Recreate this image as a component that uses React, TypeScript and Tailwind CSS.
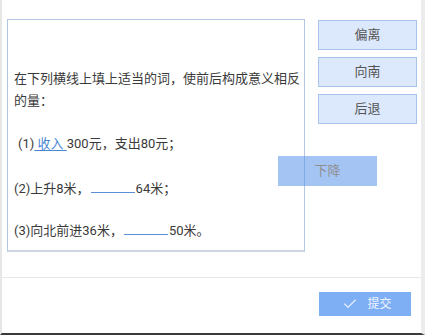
import { Check } from "lucide-react";

const font = { fontFamily: '"Roboto", "Noto Sans CJK SC", sans-serif' };

const options = ["偏离", "向南", "后退"];

function Blank() {
  return <span className="mx-[1px] inline-block w-[44px] border-b border-[#5b8fd8] align-baseline" />;
}

export default function App() {
  return (
    <div
      className="relative flex h-[335px] w-[425px] flex-col overflow-hidden border-b-2 border-l-2 border-r-4 border-b-[#3a3a3a] border-l-[#e6e6e6] border-r-[#ececec] bg-white text-[13px] text-[#3a3a3a]"
      style={font}
    >
      {/* ── Question + options ── */}
      <div className="flex h-[277px] pl-[5px] pt-[19px]">
        <div className="h-[233px] w-[298px] border border-[#b3c6e4] border-b-2 border-b-[#cdd5df] pl-[6px] pt-[48px] leading-[22px]">
          <p>在下列横线上填上适当的词，使前后构成意义相反的量：</p>
          <p className="mt-[21px] pl-[4px]">
            (1)
            <span className="text-[#4a86d6] underline decoration-[#4a86d6] underline-offset-2">&nbsp;收入&nbsp;</span>
            300元，支出80元；
          </p>
          <p className="mt-[23px]">
            (2)上升8米，
            <Blank />
            64米；
          </p>
          <p className="mt-[20px]">
            (3)向北前进36米，
            <Blank />
            50米。
          </p>
        </div>

        <div className="ml-[13px] flex w-[99px] flex-col gap-[7px] pt-px">
          {options.map((o) => (
            <div
              key={o}
              className="flex h-[30px] items-center justify-center border border-[#a9c4ec] bg-[#dce8fb] text-[#555]"
            >
              {o}
            </div>
          ))}
        </div>
      </div>

      {/* ── Dragged option ── */}
      <div className="absolute left-[276px] top-[156px] flex h-[30px] w-[99px] items-center justify-center bg-[#5a94eb] text-[#333] opacity-55">
        下降
      </div>

      {/* ── Footer ── */}
      <div className="flex flex-1 items-start justify-end border-t border-[#e8e8e8] pr-[10px] pt-[14px]">
        <div className="flex h-[24px] w-[92px] items-center justify-center gap-[9px] bg-[#7eaff5] pl-[4px] text-[12px] text-[#eef4ff]">
          <Check className="h-[16px] w-[16px]" strokeWidth={1.6} />
          <span>提交</span>
        </div>
      </div>
    </div>
  );
}
